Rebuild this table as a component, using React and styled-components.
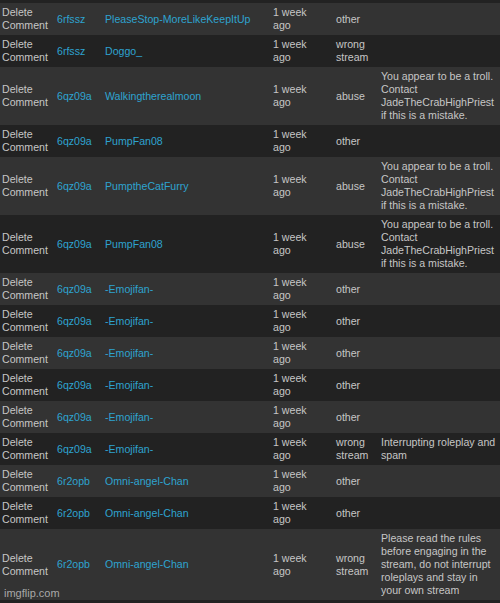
import React from "react";
import styled, { createGlobalStyle } from "styled-components";

const lineHeight = 13;
const light = "#333333";
const dark = "#222222";
const textColor = "#c6c6c6";
const linkColor = "#2ea3d0";

const GlobalStyle = createGlobalStyle`
  html, body {
    margin: 0;
    background: ${dark};
  }
  body {
    font-family: "Liberation Sans", Arial, Helvetica, sans-serif;
  }
`;

const Page = styled.div`
  position: relative;
  width: 500px;
  height: 603px;
  overflow: hidden;
  padding-top: 3px;
  box-sizing: border-box;
  background: ${dark};
`;

const Row = styled.div`
  display: grid;
  grid-template-columns: 55px 48px 168px 63px 45px 1fr;
  align-items: center;
  padding: 3px 0;
  background: ${p => (p.$odd ? light : dark)};
  font-size: 10.6px;
  line-height: ${lineHeight}px;
  color: ${textColor};
`;

const Cell = styled.div`
  padding-left: 2px;
  white-space: nowrap;
  color: ${p => (p.$link ? linkColor : textColor)};
`;

const Line = styled.div``;

const Watermark = styled.div`
  position: absolute;
  left: 4px;
  bottom: 3px;
  font-family: "Liberation Sans", Arial, sans-serif;
  font-size: 11px;
  line-height: 13px;
  color: rgba(200, 200, 200, 0.8);
`;

const troll = [
  "You appear to be a troll.",
  "Contact",
  "JadeTheCrabHighPriest",
  "if this is a mistake.",
];

const rows = [
  ["6rfssz", "PleaseStop-MoreLikeKeepItUp", ["other"], []],
  ["6rfssz", "Doggo_", ["wrong", "stream"], []],
  ["6qz09a", "Walkingtherealmoon", ["abuse"], troll],
  ["6qz09a", "PumpFan08", ["other"], []],
  ["6qz09a", "PumptheCatFurry", ["abuse"], troll],
  ["6qz09a", "PumpFan08", ["abuse"], troll],
  ["6qz09a", "-Emojifan-", ["other"], []],
  ["6qz09a", "-Emojifan-", ["other"], []],
  ["6qz09a", "-Emojifan-", ["other"], []],
  ["6qz09a", "-Emojifan-", ["other"], []],
  ["6qz09a", "-Emojifan-", ["other"], []],
  ["6qz09a", "-Emojifan-", ["wrong", "stream"], ["Interrupting roleplay and", "spam"]],
  ["6r2opb", "Omni-angel-Chan", ["other"], []],
  ["6r2opb", "Omni-angel-Chan", ["other"], []],
  [
    "6r2opb",
    "Omni-angel-Chan",
    ["wrong", "stream"],
    [
      "Please read the rules",
      "before engaging in the",
      "stream, do not interrupt",
      "roleplays and stay in",
      "your own stream",
    ],
  ],
];

const Lines = ({ lines }) => lines.map((l, i) => <Line key={i}>{l}</Line>);

export default function App() {
  return (
    <Page>
      <GlobalStyle />
      {rows.map(([id, user, type, reason], i) => (
        <Row key={i} $odd={i % 2 === 0}>
          <Cell>
            <Lines lines={["Delete", "Comment"]} />
          </Cell>
          <Cell $link>{id}</Cell>
          <Cell $link>{user}</Cell>
          <Cell>
            <Lines lines={["1 week", "ago"]} />
          </Cell>
          <Cell>
            <Lines lines={type} />
          </Cell>
          <Cell>
            <Lines lines={reason} />
          </Cell>
        </Row>
      ))}
      <Watermark>imgflip.com</Watermark>
    </Page>
  );
}
